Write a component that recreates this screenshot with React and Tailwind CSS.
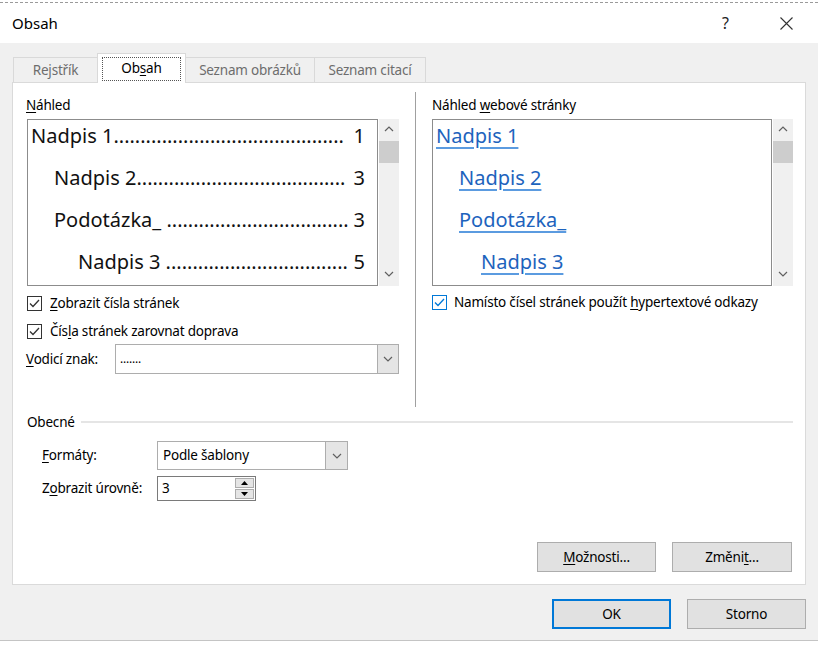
import React from "react";

const Chevron = ({ dir = "down" }) => (
  <svg width="10" height="6" viewBox="0 0 10 6">
    <path
      d={dir === "down" ? "M1 1 L5 5 L9 1" : "M1 5 L5 1 L9 5"}
      fill="none"
      stroke="#606060"
      strokeWidth="1.2"
    />
  </svg>
);

const Check = ({ blue }) => (
  <div
    className={
      blue
        ? "w-[15px] h-[15px] border border-[#0078d7] bg-white flex items-center justify-center shrink-0"
        : "w-[15px] h-[15px] border border-[#333333] bg-white flex items-center justify-center shrink-0"
    }
  >
    <svg width="13" height="13" viewBox="0 0 13 13">
      <path
        d="M2 6.5 L5 9.5 L11 3"
        fill="none"
        stroke={blue ? "#0078d7" : "#333333"}
        strokeWidth="1.3"
      />
    </svg>
  </div>
);

const Scroll = () => (
  <div className="w-[20px] h-full bg-[#f0f0f0] flex flex-col">
    <div className="h-[20px] flex items-center justify-center">
      <Chevron dir="up" />
    </div>
    <div className="mt-[2px] h-[22px] bg-[#cdcdcd]" />
    <div className="flex-1" />
    <div className="h-[24px] flex items-center justify-center">
      <Chevron />
    </div>
  </div>
);

const tocRows = [
  { pl: "pl-[3px]", text: "Nadpis 1", dots: 43, num: "1" },
  { pl: "pl-[26px]", text: "Nadpis 2", dots: 39, num: "3" },
  { pl: "pl-[26px]", text: "Podotázka_ ", dots: 34, num: "3" },
  { pl: "pl-[50px]", text: "Nadpis 3 ", dots: 34, num: "5" },
];

const webRows = [
  { pl: "pl-[3px]", text: "Nadpis 1" },
  { pl: "pl-[26px]", text: "Nadpis 2" },
  { pl: "pl-[26px]", text: "Podotázka_" },
  { pl: "pl-[48px]", text: "Nadpis 3" },
];

const U = ({ children }) => <span className="underline underline-offset-2">{children}</span>;

const Btn = ({ children, w }) => (
  <div
    className={
      w +
      " h-[30px] bg-[#e1e1e1] border border-[#adadad] flex items-center justify-center"
    }
  >
    {children}
  </div>
);

export default function App() {
  return (
    <div className="w-[818px] h-[648px] bg-white font-['Noto_Sans',sans-serif] text-[13.5px] tracking-[-0.2px] text-black flex flex-col overflow-hidden">
      <div className="h-[3px] shrink-0 border-b border-dashed border-[#9a9a9a]" />
      {/* title bar */}
      <div className="h-[40px] shrink-0 flex items-center pl-[12px] pr-[25px] tracking-normal">
        <span className="text-[15px]">Obsah</span>
        <span className="ml-auto text-[16px] text-[#222] mr-[51px]">?</span>
        <svg width="13" height="13" viewBox="0 0 13 13">
          <path d="M0.5 0.5 L12.5 12.5 M12.5 0.5 L0.5 12.5" stroke="#333" strokeWidth="1.1" />
        </svg>
      </div>

      {/* body */}
      <div className="h-[597px] shrink-0 bg-[#f0f0f0] flex flex-col px-[12px]">
        {/* tabs */}
        <div className="mt-[10px] h-[30px] flex items-end pl-[1px]">
          <div className="w-[84px] h-[26px] border-t border-l border-[#d9d9d9] flex items-center justify-center text-[#6d6d6d]">
            Rejstřík
          </div>
          <div className="relative z-10 w-[89px] h-[30px] bg-white border-t border-x border-[#d9d9d9] flex items-center justify-center">
            <span className="w-[79px] h-[24px] border border-dotted border-[#555] flex items-center justify-center">
              Ob<U>s</U>ah
            </span>
          </div>
          <div className="w-[129px] h-[26px] border-t border-r border-[#d9d9d9] flex items-center justify-center text-[#6d6d6d]">
            Seznam obrázků
          </div>
          <div className="w-[111px] h-[26px] border-t border-r border-[#d9d9d9] flex items-center justify-center text-[#6d6d6d]">
            Seznam citací
          </div>
        </div>

        {/* panel */}
        <div className="-mt-px w-[794px] h-[503px] bg-white border border-[#dadada] flex flex-col">
          <div className="h-[324px] flex">
            {/* left column */}
            <div className="ml-[13px] w-[374px] flex flex-col pt-[12px]">
              <div className="h-[20px] leading-[20px]">
                <U>N</U>áhled
              </div>
              <div className="mt-[4px] h-[167px] flex">
                <div className="ml-[1px] w-[351px] h-full border border-[#8c8c8c] bg-white overflow-hidden">
                  <div className="-mt-[5px] flex flex-col tracking-normal">
                    {tocRows.map((r, i) => (
                      <div
                        key={i}
                        className={r.pl + " h-[42px] flex items-center pr-[12px] text-[20px] text-[#111]"}
                      >
                        <span className="whitespace-pre shrink-0">{r.text}</span>
                        <span className="flex-1 min-w-0 overflow-hidden whitespace-nowrap">
                          {".".repeat(r.dots)}
                        </span>
                        <span className="shrink-0 pl-[5px]">{r.num}</span>
                      </div>
                    ))}
                  </div>
                </div>
                <div className="ml-[1px] h-full">
                  <Scroll />
                </div>
              </div>
              <div className="mt-[8px] h-[18px] flex items-center ml-[1px] gap-[8px]">
                <Check />
                <span>
                  <U>Z</U>obrazit čísla stránek
                </span>
              </div>
              <div className="mt-[10px] h-[18px] flex items-center ml-[1px] gap-[8px]">
                <Check />
                <span>
                  Čís<U>l</U>a stránek zarovnat doprava
                </span>
              </div>
              <div className="mt-[4px] h-[30px] flex items-center">
                <div className="w-[89px]">
                  <U>V</U>odicí znak:
                </div>
                <div className="w-[284px] h-full border border-[#adadad] bg-white flex">
                  <div className="flex-1 pl-[4px] flex items-center text-[12px]">.......</div>
                  <div className="w-[21px] h-full bg-[#e5e5e5] border-l border-[#adadad] flex items-center justify-center">
                    <Chevron />
                  </div>
                </div>
              </div>
            </div>

            {/* separator */}
            <div className="ml-[15px] mt-[9px] w-px h-[315px] bg-[#a0a0a0]" />

            {/* right column */}
            <div className="ml-[16px] w-[362px] flex flex-col pt-[12px]">
              <div className="h-[20px] leading-[20px]">
                Náhled <U>w</U>ebové stránky
              </div>
              <div className="mt-[4px] h-[167px] flex">
                <div className="w-[340px] h-full border border-[#8c8c8c] bg-white overflow-hidden">
                  <div className="-mt-[5px] flex flex-col tracking-normal">
                    {webRows.map((r, i) => (
                      <div key={i} className={r.pl + " h-[42px] flex items-center text-[20px]"}>
                        <span className="text-[#1d63bd] underline decoration-[#5b9be0] underline-offset-[4px]">
                          {r.text}
                        </span>
                      </div>
                    ))}
                  </div>
                </div>
                <div className="ml-[1px] h-full">
                  <Scroll />
                </div>
              </div>
              <div className="mt-[7px] h-[18px] flex items-center gap-[7px]">
                <Check blue />
                <span>
                  Namísto čísel stránek použít <U>h</U>ypertextové odkazy
                </span>
              </div>
            </div>
          </div>

          {/* Obecné */}
          <div className="mt-[6px] h-[18px] flex items-center ml-[14px]">
            <span>Obecné</span>
            <div className="flex-1 ml-[6px] mr-[12px] h-[2px] bg-[#e5e5e5]" />
          </div>
          <div className="mt-[10px] h-[29px] flex items-center ml-[29px]">
            <div className="w-[115px]">
              <U>F</U>ormáty:
            </div>
            <div className="w-[191px] h-full border border-[#adadad] bg-white flex">
              <div className="flex-1 pl-[5px] flex items-center">Podle šablony</div>
              <div className="w-[22px] h-full bg-[#e5e5e5] border-l border-[#adadad] flex items-center justify-center">
                <Chevron />
              </div>
            </div>
          </div>
          <div className="mt-[6px] h-[25px] flex items-center ml-[29px]">
            <div className="w-[115px]">
              Z<U>o</U>brazit úrovně:
            </div>
            <div className="w-[99px] h-full border border-[#7a7a7a] bg-white flex">
              <div className="flex-1 pl-[4px] flex items-center">3</div>
              <div className="w-[21px] h-full flex flex-col p-[1px] gap-[1px]">
                <div className="flex-1 bg-[#e5e5e5] border border-[#adadad] flex items-center justify-center">
                  <svg width="7" height="4" viewBox="0 0 7 4">
                    <path d="M0 4 L3.5 0 L7 4 Z" fill="#000" />
                  </svg>
                </div>
                <div className="flex-1 bg-[#e5e5e5] border border-[#adadad] flex items-center justify-center">
                  <svg width="7" height="4" viewBox="0 0 7 4">
                    <path d="M0 0 L3.5 4 L7 0 Z" fill="#000" />
                  </svg>
                </div>
              </div>
            </div>
          </div>

          <div className="flex-1" />
          <div className="h-[30px] mb-[12px] pr-[13px] flex justify-end gap-[16px]">
            <Btn w="w-[119px]">
              <span>
                <U>M</U>ožnosti...
              </span>
            </Btn>
            <Btn w="w-[120px]">
              <span>
                Změni<U>t</U>...
              </span>
            </Btn>
          </div>
        </div>

        {/* dialog buttons */}
        <div className="mt-[14px] h-[30px] flex justify-end gap-[16px]">
          <div className="w-[119px] h-[30px] bg-[#e1e1e1] border-2 border-[#0078d7] flex items-center justify-center">
            OK
          </div>
          <Btn w="w-[119px]">Storno</Btn>
        </div>
      </div>
      <div className="h-[1px] shrink-0 bg-[#c4c4c4]" />
      <div className="flex-1 bg-white" />
    </div>
  );
}
